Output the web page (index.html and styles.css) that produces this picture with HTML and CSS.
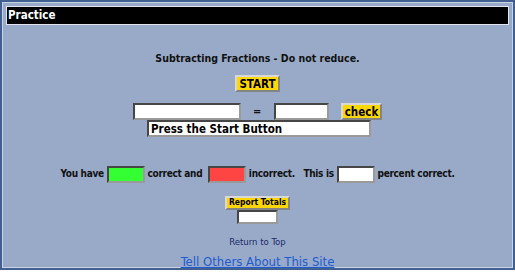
FILE: index.html
```html
<!DOCTYPE html>
<html>
<head><title>Practice</title>
<link rel="stylesheet" href="styles.css">
</head>
<body>
<div class="panel">
  <div class="title">Practice</div>
  <div class="body">
    <p class="task">Subtracting Fractions - Do not reduce.</p>
    <div class="row start-row"><button class="btn">START</button></div>
    <div class="row problem">
      <input type="text" class="box answer-left">
      <span class="eq">=</span>
      <input type="text" class="box answer-right">
      <button class="btn check">check</button>
    </div>
    <div class="row"><input type="text" class="box status" value="Press the Start Button" readonly></div>
    <div class="score">
      You have <input type="text" class="box tally good" readonly> correct and&nbsp;
      <input type="text" class="box tally bad" readonly> incorrect.&nbsp;&nbsp; This is
      <input type="text" class="box tally" readonly> percent correct.
    </div>
    <div class="row report"><button class="btn small">Report Totals</button></div>
    <div class="row"><input type="text" class="box total" readonly></div>
    <div class="row top-link"><a href="#">Return to Top</a></div>
    <div class="row tell"><a href="#">Tell Others About This Site</a></div>
  </div>
</div>
</body>
</html>
```
FILE: styles.css
```css
body {
  margin: 0;
  background-color: #fff;
  font-family: "DejaVu Sans Condensed", "DejaVu Sans", sans-serif;
}

.panel {
  width: 503px;
  height: 258px;
  border: 2px solid #41608f;
  box-shadow: inset 0 0 0 1px #c8d3e4;
  background-color: #98aac8;
  padding: 4px;
}

.title {
  background-color: #000;
  color: #fff;
  font-weight: bold;
  font-size: 11.5px;
  padding: 1px 1px 2px;
  border: 1px solid #dfe6f0;
  height: 14px;
  line-height: 14px;
}

.body {
  text-align: center;
  color: #111;
  font-size: 10.5px;
  font-weight: bold;
}

.task {
  margin: 27px 0 0;
  line-height: 12px;
}

.row {
  display: flex;
  justify-content: center;
  align-items: center;
}

.btn {
  font-family: inherit;
  font-weight: bold;
  font-size: 11.5px;
  background-color: #ffd700;
  color: #000;
  border: 2px outset #d8d8d8;
  padding: 0 2px;
  height: 17px;
  line-height: 12px;
}

.start-row {
  margin-top: 11px;
}

.problem {
  margin-top: 11px;
}

.box {
  box-sizing: border-box;
  height: 17px;
  border: 2px inset #9a9a9a;
  background-color: #fff;
  font-family: inherit;
  font-size: 11.5px;
  font-weight: bold;
  padding: 0 2px;
  vertical-align: middle;
}

.answer-left {
  width: 108px;
}

.eq {
  width: 33px;
  font-size: 11px;
}

.answer-right {
  width: 55px;
}

.check {
  margin-left: 12px;
}

.status {
  width: 224px;
  margin-left: 3px;
}

.score {
  margin-top: 28px;
  line-height: 17px;
  font-size: 10px;
  letter-spacing: -0.3px;
}

.tally {
  width: 38px;
}

.good {
  background-color: #33ff33;
}

.bad {
  background-color: #ff4444;
}

.report {
  margin-top: 13px;
}

.small {
  font-size: 8.5px;
  height: 14px;
  line-height: 9px;
}

.total {
  width: 41px;
  height: 14px;
}

.top-link {
  margin-top: 12px;
}

.top-link a {
  color: #1a2a6a;
  font-weight: normal;
  font-size: 9.5px;
  text-decoration: none;
}

.tell {
  margin-top: 7px;
}

.tell a {
  color: #1f5bd0;
  font-weight: normal;
  font-size: 13px;
  text-decoration: underline;
}
```
